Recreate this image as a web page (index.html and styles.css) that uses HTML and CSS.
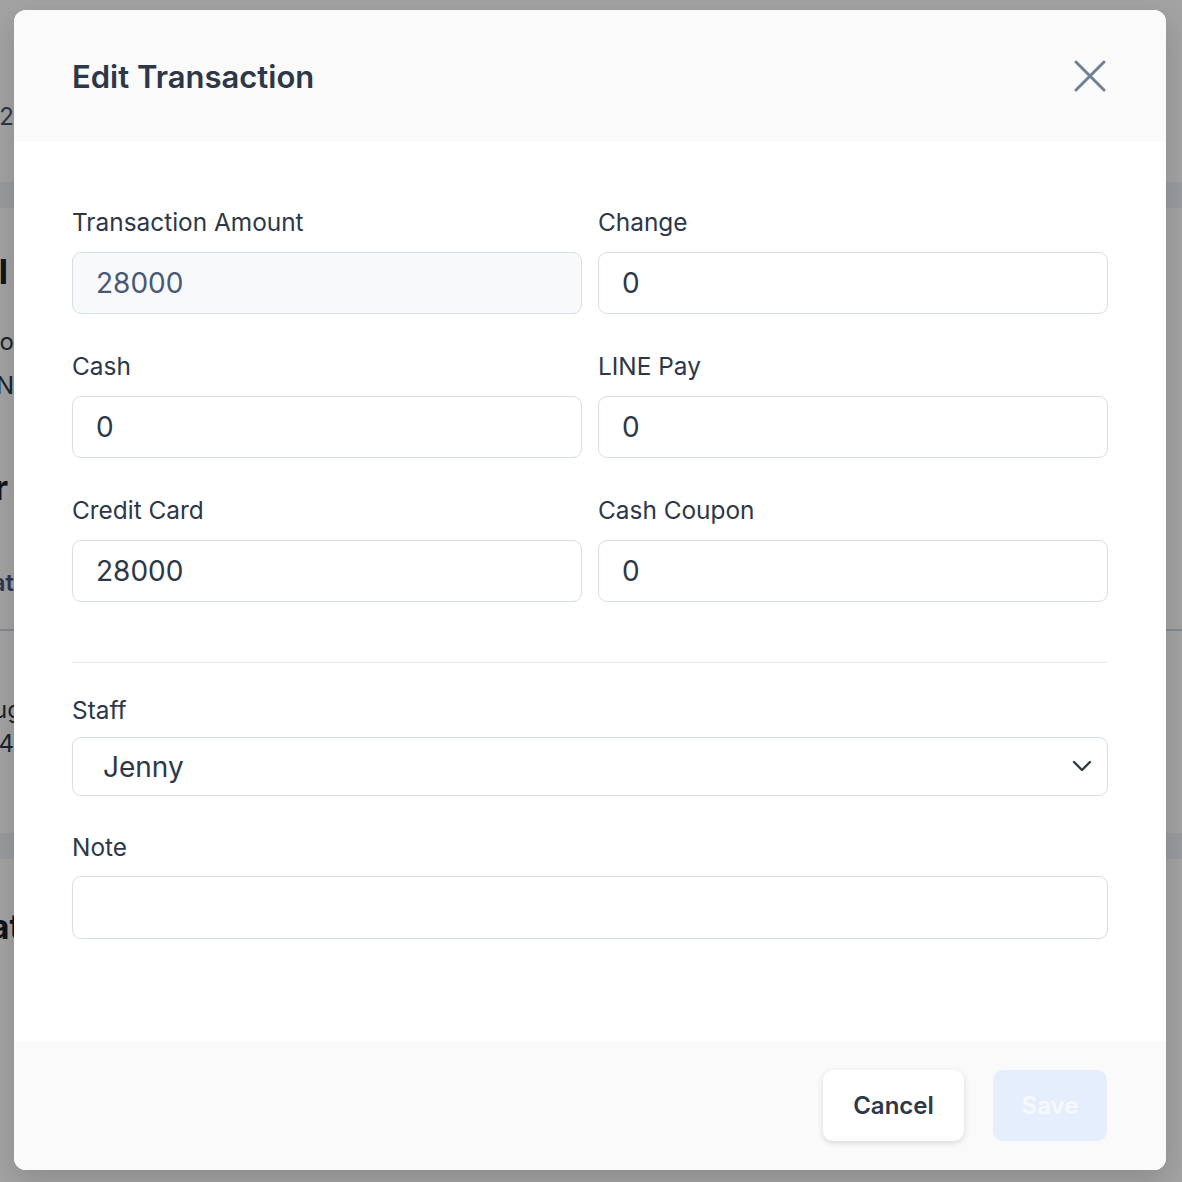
FILE: index.html
```html
<!DOCTYPE html>
<html lang="en">
<head>
  <meta charset="UTF-8" />
  <meta name="viewport" content="width=device-width, initial-scale=1.0" />
  <title>Edit Transaction</title>
  <link rel="stylesheet" href="styles.css">
</head>
<body>
  <!-- page behind the dialog -->
  <div class="page">
    <div class="page-top">
      <div class="peek peek-date">2022</div>
    </div>
    <div class="page-band"></div>
    <div class="page-sec sec-order">
      <div class="peek peek-title t1">Total</div>
      <div class="peek peek-text t2">Memo</div>
      <div class="peek peek-text t3">PIN</div>
      <div class="peek peek-title t4">Order</div>
      <div class="peek peek-link t5">Stat</div>
    </div>
    <div class="page-sec sec-date">
      <div class="peek peek-text peek-wide t6">Aug</div>
      <div class="peek peek-text t7">14</div>
    </div>
    <div class="page-band"></div>
    <div class="page-sec">
      <div class="peek peek-title peek-wide t8">Stat</div>
    </div>
  </div>

  <div class="overlay">
    <div class="modal">
      <div class="modal-header">
        <h2 class="modal-title">Edit Transaction</h2>
        <button class="close-btn" aria-label="Close">
          <svg width="36" height="36" viewBox="0 0 36 36">
            <path d="M4 4 L32 32 M32 4 L4 32" stroke="#718096" stroke-width="3" stroke-linecap="round" fill="none" />
          </svg>
        </button>
      </div>

      <div class="modal-body">
        <div class="field-grid">
          <div class="field">
            <label class="field-label">Transaction Amount</label>
            <input class="input input-readonly" type="text" value="28000" readonly />
          </div>
          <div class="field">
            <label class="field-label">Change</label>
            <input class="input" type="text" value="0" />
          </div>
          <div class="field">
            <label class="field-label">Cash</label>
            <input class="input" type="text" value="0" />
          </div>
          <div class="field">
            <label class="field-label">LINE Pay</label>
            <input class="input" type="text" value="0" />
          </div>
          <div class="field">
            <label class="field-label">Credit Card</label>
            <input class="input" type="text" value="28000" />
          </div>
          <div class="field">
            <label class="field-label">Cash Coupon</label>
            <input class="input" type="text" value="0" />
          </div>
        </div>

        <div class="divider"></div>

        <div class="field field-staff">
          <label class="field-label">Staff</label>
          <div class="select-wrap">
            <select class="select">
              <option>Jenny</option>
            </select>
            <svg class="select-icon" width="20" height="12" viewBox="0 0 20 12">
              <path d="M2 2 L10 10 L18 2" stroke="#2d3748" stroke-width="2.4" stroke-linecap="round" stroke-linejoin="round" fill="none" />
            </svg>
          </div>
        </div>

        <div class="field field-note">
          <label class="field-label">Note</label>
          <input class="input input-note" type="text" value="" />
        </div>
      </div>

      <div class="modal-footer">
        <button class="btn btn-cancel">Cancel</button>
        <button class="btn btn-save" disabled>Save</button>
      </div>
    </div>
  </div>
</body>
</html>
```

FILE: styles.css
```css
body {
  margin: 0;
  font-family: Inter, 'Noto Sans', sans-serif;
  color: #2d3748;
}

/* background page */
.page {
  width: 1182px;
  height: 1182px;
  background: #ffffff;
  overflow: hidden;
}

.page-top {
  height: 182px;
  padding-top: 101px;
  box-sizing: border-box;
}

.page-band {
  height: 26px;
  background: #f1f3f7;
}

.page-sec {
  padding-top: 1px;
}

.sec-order {
  height: 423px;
  box-sizing: border-box;
  border-bottom: 2px solid #cfd6df;
}

.sec-date {
  height: 202px;
  box-sizing: border-box;
}

.peek {
  width: 14px;
  display: flex;
  justify-content: flex-end;
  white-space: nowrap;
  line-height: 32px;
}

.peek-date {
  font-size: 24px;
  color: #4a5568;
}

.peek-title {
  font-size: 34px;
  font-weight: 700;
  color: #1a202c;
  padding-right: 6px;
  width: 8px;
}

.peek-wide {
  width: 22px;
  padding-right: 0;
}

.peek-text {
  font-size: 24px;
  color: #2d3748;
}

.peek-link {
  font-size: 24px;
  font-weight: 600;
  color: #4a5a7a;
}

.t1 { margin-top: 47px; }
.t2 { margin-top: 38px; }
.t3 { margin-top: 12px; }
.t4 { margin-top: 70px; }
.t5 { margin-top: 63px; }
.t6 { margin-top: 62px; }
.t7 { margin-top: 2px; }
.t8 { margin-top: 51px; }

/* dialog */
.overlay {
  position: absolute;
  inset: 0;
  background: rgba(0, 0, 0, 0.36);
  display: flex;
  align-items: flex-start;
  padding: 10px 0 0 14px;
}

.modal {
  width: 1152px;
  height: 1160px;
  background: #ffffff;
  border-radius: 12px;
  overflow: hidden;
  display: flex;
  flex-direction: column;
  box-shadow: 0 10px 30px rgba(0, 0, 0, 0.15);
}

.modal-header {
  height: 132px;
  flex-shrink: 0;
  background: #fafafa;
  display: flex;
  align-items: center;
  justify-content: space-between;
  padding: 0 58px;
}

.modal-title {
  margin: 0;
  font-size: 31px;
  font-weight: 600;
  color: #2d3748;
}

.close-btn {
  border: none;
  background: none;
  padding: 0;
  display: flex;
  cursor: pointer;
}

.modal-body {
  flex: 1;
  padding: 62px 58px 0;
}

.field-grid {
  display: grid;
  grid-template-columns: 1fr 1fr;
  column-gap: 16px;
  row-gap: 34px;
}

.field-label {
  display: block;
  font-size: 24.4px;
  line-height: 36px;
  margin-bottom: 12px;
  color: #2d3748;
}

.input {
  display: block;
  width: 100%;
  height: 62px;
  box-sizing: border-box;
  border: 1px solid #d6dee8;
  border-radius: 9px;
  padding: 0 23px;
  font-family: Inter, 'Noto Sans', sans-serif;
  font-size: 28px;
  color: #2d3748;
  background: #ffffff;
  outline: none;
}

.input-readonly {
  background: #f7f9fb;
  color: #4a5775;
}

.divider {
  border-top: 1px solid #e6e9ee;
  margin: 60px 0 29px;
}

.field-staff .field-label {
  margin-bottom: 9px;
}

.select-wrap {
  position: relative;
}

.select {
  display: block;
  width: 100%;
  height: 59px;
  box-sizing: border-box;
  border: 1px solid #d6dee8;
  border-radius: 9px;
  padding: 0 30px;
  font-family: Inter, 'Noto Sans', sans-serif;
  font-size: 28px;
  color: #2d3748;
  background: #ffffff;
  appearance: none;
  -webkit-appearance: none;
  outline: none;
}

.select-icon {
  position: absolute;
  right: 16px;
  top: 23px;
}

.field-note {
  margin-top: 33px;
}

.field-note .field-label {
  margin-bottom: 11px;
}

.input-note {
  height: 63px;
}

.modal-footer {
  height: 129px;
  flex-shrink: 0;
  background: #fafafa;
  display: flex;
  justify-content: flex-end;
  align-items: center;
  gap: 29px;
  padding: 0 59px;
}

.btn {
  height: 71px;
  border: none;
  border-radius: 10px;
  font-family: Inter, 'Noto Sans', sans-serif;
  font-size: 24px;
  font-weight: 600;
  cursor: pointer;
}

.btn-cancel {
  width: 141px;
  background: #ffffff;
  color: #2d3748;
  box-shadow: 0 2px 6px rgba(0, 0, 0, 0.14);
}

.btn-save {
  width: 114px;
  background: #e5eefc;
  color: #f7faff;
}
```
